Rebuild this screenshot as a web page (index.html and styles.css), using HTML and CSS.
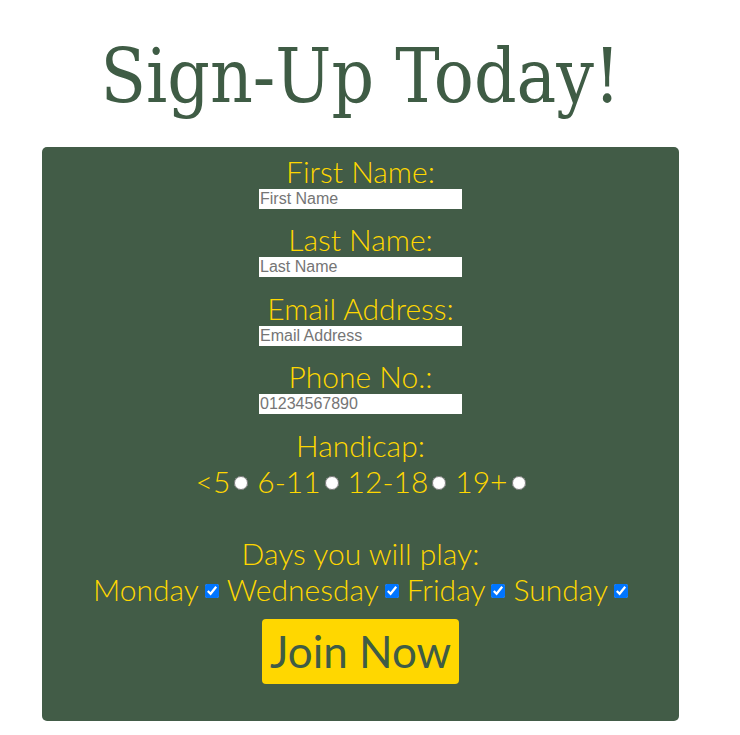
FILE: index.html
```html
<!DOCTYPE html>
<html lang="en">
<head>
<meta charset="utf-8">
<title>Sign-Up Today!</title>
<link rel="stylesheet" href="styles.css">
</head>
<body>
<div class="page">
  <h1 class="title">Sign-Up Today!</h1>
  <form class="signup">
    <div class="field">
      <label class="label" for="fname">First Name:</label>
      <input class="text-input" id="fname" type="text" placeholder="First Name">
    </div>
    <div class="field">
      <label class="label" for="lname">Last Name:</label>
      <input class="text-input" id="lname" type="text" placeholder="Last Name">
    </div>
    <div class="field">
      <label class="label" for="email">Email Address:</label>
      <input class="text-input" id="email" type="email" placeholder="Email Address">
    </div>
    <div class="field last">
      <label class="label" for="phone">Phone No.:</label>
      <input class="text-input" id="phone" type="tel" placeholder="01234567890">
    </div>
    <div class="group">
      <div class="label">Handicap:</div>
      <div class="options">
        <label class="option">&lt;5<input class="radio" type="radio" name="hc"></label>
        <label class="option">6-11<input class="radio" type="radio" name="hc"></label>
        <label class="option">12-18<input class="radio" type="radio" name="hc"></label>
        <label class="option">19+<input class="radio" type="radio" name="hc"></label>
      </div>
    </div>
    <div class="group days">
      <div class="label">Days you will play:</div>
      <div class="options">
        <label class="option">Monday<input class="check" type="checkbox" checked></label>
        <label class="option">Wednesday<input class="check" type="checkbox" checked></label>
        <label class="option">Friday<input class="check" type="checkbox" checked></label>
        <label class="option">Sunday<input class="check" type="checkbox" checked></label>
      </div>
    </div>
    <button class="join" type="submit">Join Now</button>
  </form>
</div>
</body>
</html>
```

FILE: styles.css
```css
body {
  margin: 8px;
  background: #ffffff;
}

.page {
  width: 705px;
}

.title {
  margin: 18px 0 0;
  text-align: center;
  font-family: "DejaVu Serif Condensed", "DejaVu Serif", serif;
  font-weight: normal;
  font-size: 74px;
  line-height: 100px;
  color: #3f5c45;
}

.signup {
  width: 637px;
  margin: 21px auto 0;
  padding: 6px 0 37px;
  background: #425c47;
  border-radius: 5px;
  display: flex;
  flex-direction: column;
  align-items: center;
  font-family: Lato, sans-serif;
  font-weight: 300;
  color: #ffd700;
}

.field {
  display: flex;
  flex-direction: column;
  align-items: center;
  margin-bottom: 12.3px;
}

.field.last {
  margin-bottom: 13.4px;
}

.label {
  font-size: 30px;
  line-height: 36px;
}

.text-input {
  width: 203px;
  height: 20px;
  box-sizing: border-box;
  border: none;
  padding: 0 1px;
  margin: 0;
  font-family: "Liberation Sans", Arial, sans-serif;
  font-size: 16px;
  background: #ffffff;
  color: #333;
  outline: none;
}

.text-input::placeholder {
  color: #757575;
}

.group {
  display: flex;
  flex-direction: column;
  align-items: center;
}

.days {
  margin-top: 36px;
}

.options {
  display: flex;
  align-items: center;
  font-size: 30px;
  line-height: 36px;
}

.option {
  display: flex;
  align-items: center;
}

.option input {
  width: 14px;
  height: 14px;
  margin-top: 4px;
  margin-bottom: 0;
}

.radio {
  margin-left: 4px;
  margin-right: 9px;
}

.check {
  margin-left: 6px;
  margin-right: 8px;
}

.option:last-child input {
  margin-right: 0;
}

.join {
  margin-top: 11.6px;
  width: 197px;
  height: 65px;
  border: none;
  border-radius: 4px;
  background: #ffd700;
  color: #3f5c45;
  font-family: Lato, sans-serif;
  font-weight: 400;
  font-size: 44px;
  padding: 0;
}
```
